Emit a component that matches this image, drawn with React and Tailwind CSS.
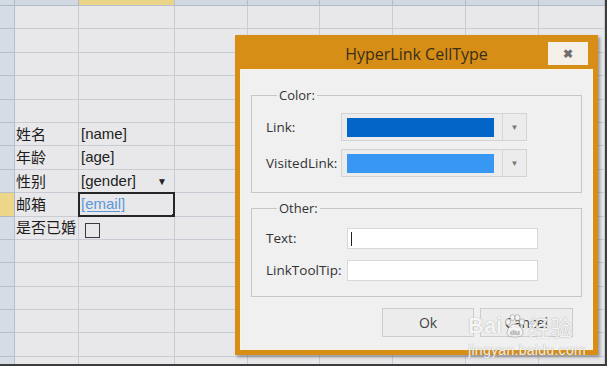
import React from "react";

const ROWS = Array.from({ length: 16 }, (_, i) => i);
const COLS = Array.from({ length: 9 }, (_, i) => i);

const labels = {
  5: "姓名",
  6: "年龄",
  7: "性别",
  8: "邮箱",
  9: "是否已婚",
};

function HeaderCell({ c }) {
  if (c === 0) return <div className="bg-[#d3dae4] border-r border-b border-[#aeb9c8]" />;
  if (c === 2) return <div className="bg-[#ead487] border-r border-b border-[#b9c0cb]" />;
  return <div className="bg-[#d2d8e1] border-r border-b border-[#b2bcc9]" />;
}

function ValueCell({ r }) {
  if (r === 5 || r === 6) {
    return (
      <span className="pl-[2px] font-['Liberation_Sans',sans-serif] text-[15px] text-[#222]">
        {r === 5 ? "[name]" : "[age]"}
      </span>
    );
  }
  if (r === 7) {
    return (
      <div className="flex w-full items-center justify-between pl-[2px] pr-[7px]">
        <span className="font-['Liberation_Sans',sans-serif] text-[15px] text-[#222]">[gender]</span>
        <span className="text-[10px] leading-none text-[#222]">▼</span>
      </div>
    );
  }
  if (r === 8) {
    return (
      <>
        <span className="pl-[2px] font-['Liberation_Sans',sans-serif] text-[15px] text-[#5a98d8] underline underline-offset-2">
          [email]
        </span>
        {/* selection frame */}
        <span className="absolute -left-px -top-px -right-px -bottom-px border-2 border-[#262626]" />
        <span className="absolute -right-[3px] -bottom-[3px] h-[5px] w-[5px] bg-[#262626]" />
      </>
    );
  }
  if (r === 9) return <span className="ml-[6px] mt-[5px] h-[15px] w-[15px] border border-[#3a3a3a]" />;
  return null;
}

function Cell({ r, c }) {
  if (c === 0) {
    return (
      <div
        className={
          r === 8
            ? "bg-[#ecd68a] border-r border-b border-[#aeb9c8]"
            : "bg-[#d5dce6] border-r border-b border-[#b6c0cd]"
        }
      />
    );
  }
  return (
    <div className="relative flex items-center whitespace-nowrap bg-[#e8e8ea] border-r border-b border-[#c8ccd5]">
      {c === 1 && labels[r] && (
        <span className="pl-[1px] font-['Noto_Sans_CJK_SC',sans-serif] text-[15px] text-[#1c1c1c]">{labels[r]}</span>
      )}
      {c === 2 && <ValueCell r={r} />}
    </div>
  );
}

function ColorCombo({ color }) {
  return (
    <div className="flex h-[28px] w-[186px] border border-[#d3d3d3] bg-[#ececec]">
      <div className="flex flex-1 items-center pl-[5px] pr-[8px]">
        <div className={color === "link" ? "h-[19px] w-full bg-[#0465c8]" : "h-[19px] w-full bg-[#3897f2]"} />
      </div>
      <div className="flex w-[24px] items-center justify-center border-l border-[#d6d6d6]">
        <span className="text-[8px] leading-none text-[#777]">▼</span>
      </div>
    </div>
  );
}

export default function App() {
  return (
    <div className="relative h-[368px] w-[610px] overflow-hidden bg-white">
      {/* spreadsheet */}
      <div className="h-[366px] w-[607px] overflow-hidden border-r-2 border-b-2 border-[#3d3d3d]">
        <div className="grid grid-cols-[15px_64px_96px_73px_72px_73px_73px_73px_1fr] grid-rows-[6px_repeat(16,23.4px)]">
          {COLS.map((c) => (
            <HeaderCell key={"h" + c} c={c} />
          ))}
          {ROWS.map((r) => COLS.map((c) => <Cell key={r + "-" + c} r={r} c={c} />))}
        </div>
      </div>

      {/* dialog */}
      <div className="absolute left-[235px] top-[35px] flex h-[320px] w-[363px] flex-col bg-[#d68e16] px-[5px] pb-[5px] shadow-[2px_2px_3px_rgba(0,0,0,0.35)] font-['Open_Sans',sans-serif]">
        <div className="grid h-[34px] grid-cols-[1fr_auto_1fr]">
          <div />
          <div className="pt-[7px] text-[16px] text-[#3a2e1c]">HyperLink CellType</div>
          <div className="flex justify-end pt-[7px] pr-[5px]">
            <div className="flex h-[23px] w-[40px] items-center justify-center bg-[#f4f0e9]">
              <span className="text-[12px] font-bold leading-none text-[#6e6e6e]">✖</span>
            </div>
          </div>
        </div>

        <div className="flex flex-1 flex-col border border-[#fdf3df] bg-[#f0f0f1] px-[10px] pt-[17px] text-[13.5px] text-[#333]">
          <fieldset className="border border-[#c6c6c6] pt-[9px] pr-[10px] pb-[15px] pl-[14px]">
            <legend className="ml-[11px] px-[2px] text-[13px] leading-[17px]">Color:</legend>
            <div className="flex flex-col gap-[8px]">
              <div className="flex items-center">
                <span className="w-[75px]">Link:</span>
                <ColorCombo color="link" />
              </div>
              <div className="flex items-center">
                <span className="w-[75px]">VisitedLink:</span>
                <ColorCombo color="visited" />
              </div>
            </div>
          </fieldset>

          <fieldset className="mt-[7px] border border-[#c6c6c6] pt-[11px] pr-[10px] pb-[15px] pl-[14px]">
            <legend className="ml-[11px] px-[2px] text-[13px] leading-[17px]">Other:</legend>
            <div className="flex flex-col gap-[11px]">
              <div className="flex items-center">
                <span className="w-[81px]">Text:</span>
                <div className="flex h-[21px] w-[191px] items-center border border-[#d8d8d8] bg-white pl-[3px]">
                  <span className="h-[14px] w-px bg-[#222]" />
                </div>
              </div>
              <div className="flex items-center">
                <span className="w-[81px]">LinkToolTip:</span>
                <div className="h-[21px] w-[191px] border border-[#d8d8d8] bg-white" />
              </div>
            </div>
          </fieldset>

          <div className="mt-[11px] flex justify-end gap-[6px] pr-[9px] text-[14px] text-[#444]">
            <button className="h-[29px] w-[92px] border border-[#cdcdcd] bg-[#ececec]">Ok</button>
            <button className="h-[29px] w-[93px] border border-[#cdcdcd] bg-[#ececec]">Cancel</button>
          </div>
        </div>
      </div>

      {/* watermark */}
      <div className="absolute left-[468px] top-[314px] flex flex-col items-start text-[#f7f7f7] opacity-90 [text-shadow:0_0_1px_#8a8a8a]">
        <div className="flex items-center font-['Liberation_Sans',sans-serif] text-[22px] font-bold leading-none">
          <span>Bai</span>
          <svg width="24" height="24" viewBox="0 0 24 24" className="mx-[1px]">
            <g fill="#f7f7f7" stroke="#8a8a8a" strokeWidth="0.6">
              <ellipse cx="5" cy="8" rx="2.6" ry="3.2" />
              <ellipse cx="9.5" cy="3.6" rx="2.4" ry="3" />
              <ellipse cx="14.5" cy="3.6" rx="2.4" ry="3" />
              <ellipse cx="19" cy="8" rx="2.6" ry="3.2" />
              <path d="M12 10c-4 0-8 5-8 9 0 3 3 4 8 4s8-1 8-4c0-4-4-9-8-9z" />
            </g>
            <text x="12" y="20.5" textAnchor="middle" fontSize="8" fontWeight="bold" fill="#bdbdbd" stroke="none" fontFamily="Liberation Sans">du</text>
          </svg>
          <span className="font-['Noto_Sans_CJK_SC',sans-serif] text-[22px] font-normal">经验</span>
        </div>
        <span className="mt-[5px] font-['Liberation_Sans',sans-serif] text-[14px] leading-none tracking-[0.3px]">jingyan.baidu.com</span>
      </div>
    </div>
  );
}
